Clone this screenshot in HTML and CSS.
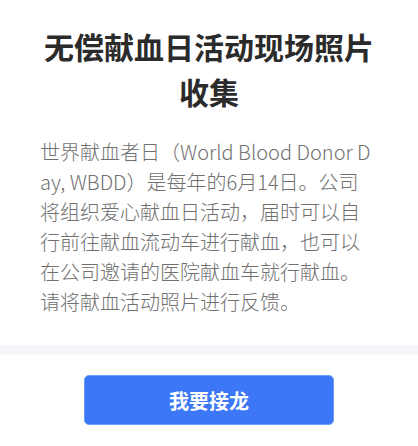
FILE: index.html
```html
<!DOCTYPE html>
<html lang="zh-CN">
<head>
  <meta charset="UTF-8">
  <title>无偿献血日活动现场照片收集</title>
  <link rel="stylesheet" href="styles.css">
</head>
<body>
  <div class="intro">
    <h1 class="title">无偿献血日活动现场照片收集</h1>
    <p class="desc">世界献血者日（World Blood Donor Day, WBDD）是每年的6月14日。公司将组织爱心献血日活动，届时可以自行前往献血流动车进行献血，也可以在公司邀请的医院献血车就行献血。请将献血活动照片进行反馈。</p>
  </div>

  <div class="divider"></div>

  <div class="footer">
    <button class="join-btn">我要接龙</button>
  </div>
</body>
</html>
```

FILE: styles.css
```css
body {
  margin: 0;
  padding: 0;
  background: #ffffff;
  font-family: "Noto Sans CJK SC", "Noto Sans", sans-serif;
}

.intro {
  padding: 24px 40px 28px;
}

.title {
  margin: 0;
  font-size: 30px;
  line-height: 45px;
  font-weight: 700;
  color: #2b2b2b;
  text-align: center;
}

.desc {
  margin: 23px 0 0;
  font-family: "Noto Sans CJK SC Light", "Noto Sans CJK SC DemiLight", "Noto Sans CJK SC", sans-serif;
  font-size: 20px;
  line-height: 30px;
  font-weight: 300;
  color: #707070;
  word-break: break-all;
}

.divider {
  height: 10px;
  background: #f5f6f9;
}

.footer {
  display: flex;
  justify-content: center;
  padding: 20px 0;
}

.join-btn {
  width: 250px;
  height: 50px;
  background-color: #3b77f6;
  color: #ffffff;
  border: 1px solid #6d9af5;
  border-radius: 5px;
  font-family: "Noto Sans CJK SC", serif;
  font-size: 20px;
  font-weight: 700;
  cursor: pointer;
}
```
